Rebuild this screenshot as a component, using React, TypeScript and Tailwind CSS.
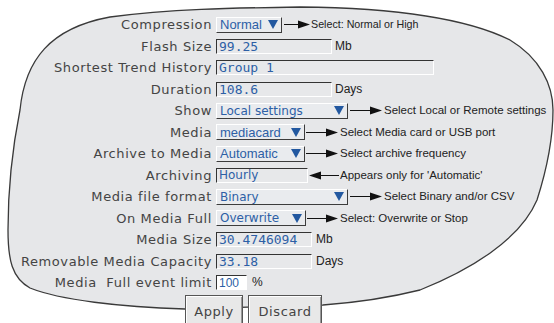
import React from "react";

const LABEL = "font-['DejaVu_Sans',sans-serif] text-[13px] tracking-[0.6px] text-[#444]";
const BLUE = "text-[#2d5fa6]";

function Tri() {
  return (
    <svg width="10" height="9" viewBox="0 0 10 9" className="shrink-0">
      <polygon points="0,0 10,0 5,9" fill="#2258a0" />
    </svg>
  );
}

function Drop({ w, text, arial }: { w: number; text: string; arial?: boolean }) {
  return (
    <div
      style={{ width: w }}
      className="h-[16px] flex items-center justify-between pl-[3px] pr-[3px] bg-[#e9ebee] border border-t-white border-l-white border-b-[#3c3c3c] border-r-[#3c3c3c]"
    >
      <span
        className={
          (arial
            ? "font-['Liberation_Sans',sans-serif] text-[13px] "
            : "font-['DejaVu_Sans',sans-serif] text-[12px] ") +
          BLUE +
          " leading-none"
        }
      >
        {text}
      </span>
      <Tri />
    </div>
  );
}

function Input({ w, text, white, plain }: { w: number; text: string; white?: boolean; plain?: boolean }) {
  return (
    <div
      style={{ width: w }}
      className={
        "h-[15px] flex items-center pl-[2px] border border-t-[#333] border-l-[#333] border-b-white border-r-white " +
        (white ? "bg-white" : "bg-[#e7e8ea]")
      }
    >
      <span
        className={
          (white
            ? "font-['Liberation_Sans',sans-serif] text-[12px] "
            : plain
            ? "font-['DejaVu_Sans',sans-serif] text-[12px] "
            : "font-['DejaVu_Sans_Mono',monospace] text-[13px] ") +
          BLUE +
          " leading-none"
        }
      >
        {text}
      </span>
    </div>
  );
}

function ArrowR({ w }: { w: number }) {
  return (
    <svg width={w} height="9" viewBox={`0 0 ${w} 9`} className="shrink-0">
      <line x1="0" y1="4.5" x2={w - 8} y2="4.5" stroke="#111" strokeWidth="1" />
      <polygon points={`${w - 12},0.5 ${w},4.5 ${w - 12},8.5`} fill="#111" />
    </svg>
  );
}

function ArrowL({ w }: { w: number }) {
  return (
    <svg width={w} height="9" viewBox={`0 0 ${w} 9`} className="shrink-0">
      <line x1="8" y1="4.5" x2={w} y2="4.5" stroke="#111" strokeWidth="1" />
      <polygon points={`12,0.5 0,4.5 12,8.5`} fill="#111" />
    </svg>
  );
}

function Note({ children, size = "text-[11.5px]" }: { children: React.ReactNode; size?: string }) {
  return (
    <span className={"font-['Liberation_Sans',sans-serif] text-[#222] leading-none whitespace-nowrap " + size}>
      {children}
    </span>
  );
}

function Unit({ children }: { children: React.ReactNode }) {
  return (
    <span className="font-['Liberation_Sans',sans-serif] text-[12px] text-[#222] leading-none mb-[1px]">{children}</span>
  );
}

function Row({ label, children }: { label: string; children: React.ReactNode }) {
  return (
    <div className="h-[21.5px] flex items-center">
      <div className={"w-[212px] shrink-0 text-right whitespace-pre leading-none " + LABEL}>{label}</div>
      <div className="ml-[4px] flex items-center">{children}</div>
    </div>
  );
}

export default function App() {
  return (
    <div className="relative w-[554px] h-[323px] overflow-hidden bg-white">
      <svg className="absolute inset-0" width="554" height="323" viewBox="0 0 554 323">
        <path
          d="M 20 110 C 25 60, 50 28, 110 17 C 170 9, 230 8, 300 7 C 400 8, 470 20, 510 40 C 540 58, 553 85, 553 110 C 553 145, 545 175, 537 200 C 520 240, 470 270, 420 290 C 380 300, 350 303, 323 305 L 185 309 C 120 307, 60 300, 30 288 C 12 278, 8 260, 8 230 C 8 190, 12 150, 20 110 Z"
          fill="#e6e7e9"
          stroke="#3a3a3a"
          strokeWidth="1.3"
        />
      </svg>
      <div className="relative flex flex-col pt-[14px]">
        <Row label="Compression">
          <Drop w={66} text="Normal" arial />
          <div className="ml-[2px] flex"><ArrowR w={26} /></div>
          <div className="ml-[1px] flex"><Note size="text-[10.7px]">Select: Normal or High</Note></div>
        </Row>
        <Row label="Flash Size">
          <Input w={116} text="99.25" />
          <div className="ml-[3px] flex"><Unit>Mb</Unit></div>
        </Row>
        <Row label="Shortest Trend History">
          <Input w={218} text="Group 1" />
        </Row>
        <Row label="Duration">
          <Input w={116} text="108.6" />
          <div className="ml-[3px] flex"><Unit>Days</Unit></div>
        </Row>
        <Row label="Show">
          <Drop w={132} text="Local settings" />
          <div className="ml-[2px] flex"><ArrowR w={32} /></div>
          <div className="ml-[2px] flex"><Note>Select Local or Remote settings</Note></div>
        </Row>
        <Row label="Media">
          <Drop w={89} text="mediacard" arial />
          <div className="ml-[1px] flex"><ArrowR w={32} /></div>
          <div className="ml-[2px] flex"><Note>Select Media card or USB port</Note></div>
        </Row>
        <Row label="Archive to Media">
          <Drop w={89} text="Automatic" arial />
          <div className="ml-[1px] flex"><ArrowR w={32} /></div>
          <div className="ml-[2px] flex"><Note>Select archive frequency</Note></div>
        </Row>
        <Row label="Archiving">
          <Input w={92} text="Hourly" plain />
          <div className="ml-[1px] flex"><ArrowL w={30} /></div>
          <div className="ml-[1px] flex"><Note>Appears only for 'Automatic'</Note></div>
        </Row>
        <Row label="Media file format">
          <Drop w={132} text="Binary" />
          <div className="ml-[2px] flex"><ArrowR w={32} /></div>
          <div className="ml-[2px] flex"><Note>Select Binary and/or CSV</Note></div>
        </Row>
        <Row label="On Media Full">
          <Drop w={90} text="Overwrite" />
          <div className="ml-[1px] flex"><ArrowR w={31} /></div>
          <div className="ml-[2px] flex"><Note>Select: Overwrite or Stop</Note></div>
        </Row>
        <Row label="Media Size">
          <Input w={96} text="30.4746094" />
          <div className="ml-[4px] flex"><Unit>Mb</Unit></div>
        </Row>
        <Row label="Removable Media Capacity">
          <Input w={96} text="33.18" />
          <div className="ml-[4px] flex"><Unit>Days</Unit></div>
        </Row>
        <Row label="Media  Full event limit">
          <Input w={31} text="100" white />
          <div className="ml-[5px] flex"><Unit>%</Unit></div>
        </Row>
        <div className="flex mt-[1px] ml-[185px] gap-[5px]">
          <button className={"w-[58px] h-[34px] bg-[#e8e8e8] border border-[#555] shadow-[inset_1px_1px_0_#fff,inset_-1px_-1px_0_#999] pb-[0px] " + LABEL}>
            Apply
          </button>
          <button className={"w-[74px] h-[34px] bg-[#e8e8e8] border border-[#555] shadow-[inset_1px_1px_0_#fff,inset_-1px_-1px_0_#999] pb-[0px] " + LABEL}>
            Discard
          </button>
        </div>
      </div>
    </div>
  );
}
